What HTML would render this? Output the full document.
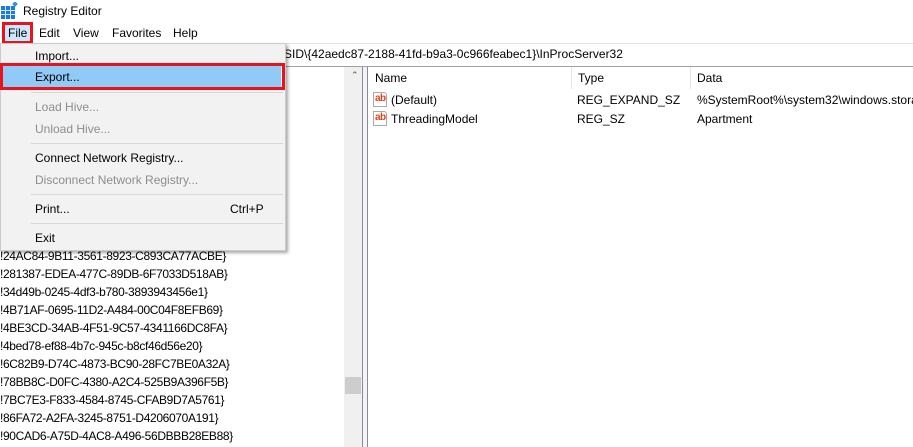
<!DOCTYPE html>
<html><head><style>
*{margin:0;padding:0;box-sizing:border-box}
body{width:913px;height:447px;overflow:hidden;background:#fff;font-family:"Liberation Sans",Arial,sans-serif;font-size:12px;color:#000;position:relative}
.a{position:absolute;white-space:nowrap}
.mi{position:absolute;left:35px;font-size:12px}
.dis{color:#8d8d8d}
.sep{position:absolute;left:31px;width:252px;height:1px;background:#d7d7d7}
.ab{position:absolute;width:14px;height:15px;background:#fff;border:1px solid #aaa;border-radius:0 3px 0 0;font-size:10px;font-weight:bold;color:#e0401a;line-height:12px;text-align:left;padding-left:1px;letter-spacing:-0.5px}
</style></head><body>
<svg class="a" style="left:1px;top:2px" width="18" height="17" viewBox="0 0 18 17">
<rect x="0" y="4" width="14" height="13" fill="#1e7ad6"/>
<g stroke="#cfe6fb" stroke-width="1"><line x1="0" y1="8.5" x2="14" y2="8.5"/><line x1="0" y1="12.5" x2="14" y2="12.5"/><line x1="4.5" y1="4" x2="4.5" y2="17"/><line x1="9.5" y1="4" x2="9.5" y2="17"/></g>
<rect x="12" y="0" width="4" height="4" fill="#3a8fe0" transform="rotate(45 14 2)"/>
</svg>
<div class="a" style="left:23px;top:4px;font-size:12px">Registry Editor</div>
<div class="a" style="left:2px;top:22px;width:31px;height:22px;border:3px solid #e8141c;background:#cce8ff"></div>
<div class="a" style="left:8px;top:26px">File</div>
<div class="a" style="left:39px;top:26px">Edit</div>
<div class="a" style="left:73px;top:26px">View</div>
<div class="a" style="left:112px;top:26px">Favorites</div>
<div class="a" style="left:173px;top:26px">Help</div>
<div class="a" style="left:0;top:43px;width:913px;height:24px;border-top:1px solid #e0e0e0;border-bottom:1px solid #a0a0a0;background:#fff"></div>
<div class="a" style="left:284px;top:47px">SID\{42aedc87-2188-41fd-b9a3-0c966feabec1}\InProcServer32</div>
<div class="a" style="left:344px;top:67px;width:18px;height:380px;background:#f0f0f0"></div>
<div class="a" style="left:351px;top:70px;font-size:9px;color:#555">&#8963;</div>
<div class="a" style="left:345px;top:377px;width:16px;height:17px;background:#cdcdcd"></div>
<div class="a" style="left:362px;top:67px;width:1px;height:380px;background:#8a8a9a"></div>
<div class="a" style="left:363px;top:67px;width:4px;height:380px;background:#f3f3f3"></div>
<div class="a" style="left:367px;top:67px;width:1px;height:380px;background:#8a8a9a"></div>
<div class="a" style="left:0;top:247px;line-height:18px;letter-spacing:-0.35px">
!24AC84-9B11-3561-8923-C893CA77ACBE}<br>!281387-EDEA-477C-89DB-6F7033D518AB}<br>!34d49b-0245-4df3-b780-3893943456e1}<br>!4B71AF-0695-11D2-A484-00C04F8EFB69}<br>!4BE3CD-34AB-4F51-9C57-4341166DC8FA}<br>!4bed78-ef88-4b7c-945c-b8cf46d56e20}<br>!6C82B9-D74C-4873-BC90-28FC7BE0A32A}<br>!78BB8C-D0FC-4380-A2C4-525B9A396F5B}<br>!7BC7E3-F833-4584-8745-CFAB9D7A5761}<br>!86FA72-A2FA-3245-8751-D4206070A191}<br>!90CAD6-A75D-4AC8-A496-56DBBB28EB88}
</div>
<div class="a" style="left:375px;top:71px">Name</div>
<div class="a" style="left:571px;top:67px;width:1px;height:22px;background:#e5e5e5"></div>
<div class="a" style="left:578px;top:71px">Type</div>
<div class="a" style="left:690px;top:67px;width:1px;height:22px;background:#e5e5e5"></div>
<div class="a" style="left:697px;top:71px">Data</div>
<div class="ab" style="left:373px;top:92px">ab</div>
<div class="a" style="left:391px;top:93px">(Default)</div>
<div class="a" style="left:577px;top:93px">REG_EXPAND_SZ</div>
<div class="a" style="left:697px;top:93px">%SystemRoot%\system32\windows.storage.dll</div>
<div class="ab" style="left:373px;top:111px">ab</div>
<div class="a" style="left:391px;top:112px">ThreadingModel</div>
<div class="a" style="left:577px;top:112px">REG_SZ</div>
<div class="a" style="left:697px;top:112px">Apartment</div>
<div class="a" style="left:0;top:43px;width:286px;height:208px;background:#f2f2f2;border:1px solid #cccccc;box-shadow:2px 2px 3px rgba(0,0,0,0.35)"></div>
<div class="mi" style="top:49px">Import...</div>
<div class="a" style="left:3px;top:65px;width:278px;height:23px;background:#91c9f7"></div>
<div class="a" style="left:0;top:63px;width:285px;height:27px;border:3px solid #e8141c"></div>
<div class="mi" style="top:70px">Export...</div>
<div class="sep" style="top:92px"></div>
<div class="mi dis" style="top:100px">Load Hive...</div>
<div class="mi dis" style="top:122px">Unload Hive...</div>
<div class="sep" style="top:143px"></div>
<div class="mi" style="top:151px">Connect Network Registry...</div>
<div class="mi dis" style="top:173px">Disconnect Network Registry...</div>
<div class="sep" style="top:194px"></div>
<div class="mi" style="top:202px">Print...</div>
<div class="a" style="left:230px;top:202px">Ctrl+P</div>
<div class="sep" style="top:223px"></div>
<div class="mi" style="top:231px">Exit</div>
</body></html>
